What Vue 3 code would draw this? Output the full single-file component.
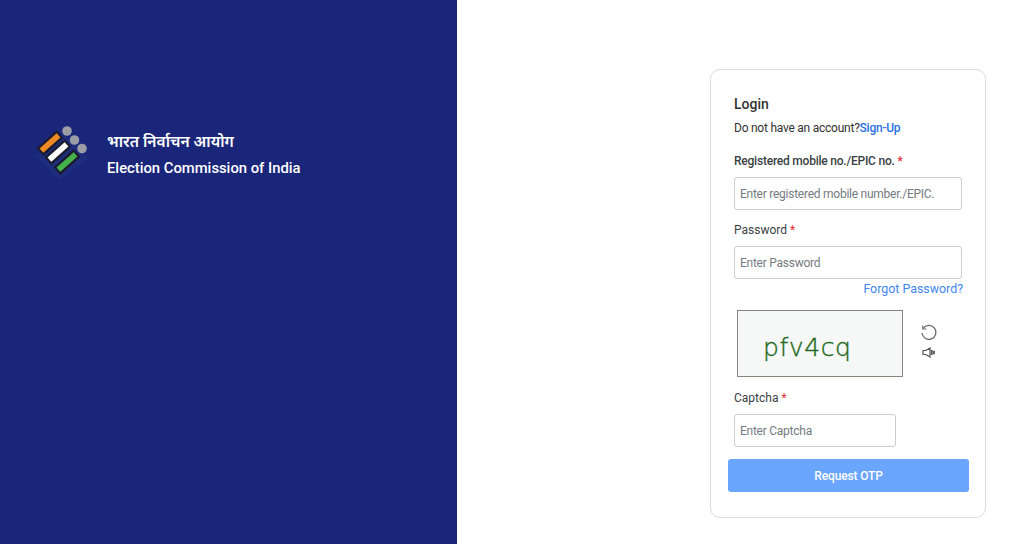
<template>
  <div class="page">
    <aside class="brand">
      <svg class="logo" width="56" height="56" viewBox="0 0 56 56">
        <path d="M1 32 L30 10 L54 34 L26 56 Z" fill="#20307f" opacity="0.6" />
        <g transform="translate(16 19) rotate(-42)">
          <rect x="-13.5" y="-5.2" width="27" height="10.4" rx="1" fill="#1b1c30" />
          <rect x="-11.5" y="-2.8" width="23" height="5.6" fill="#f08a24" />
        </g>
        <g transform="translate(24 28) rotate(-42)">
          <rect x="-13.5" y="-5.2" width="27" height="10.4" rx="1" fill="#1b1c30" />
          <rect x="-11.5" y="-2.8" width="23" height="5.6" fill="#fff" />
        </g>
        <g transform="translate(33 38) rotate(-42)">
          <rect x="-13.5" y="-5.2" width="27" height="10.4" rx="1" fill="#1b1c30" />
          <rect x="-11.5" y="-2.8" width="23" height="5.6" fill="#46b04a" />
        </g>
        <circle cx="33" cy="7" r="4.8" fill="#9a9ca6" />
        <circle cx="40.5" cy="16" r="4.8" fill="#9a9ca6" />
        <circle cx="48" cy="24.5" r="4.8" fill="#9a9ca6" />
      </svg>
      <div class="brand-text">
        <div class="hindi">भारत निर्वाचन आयोग</div>
        <div class="english">Election Commission of India</div>
      </div>
    </aside>

    <main class="main">
      <form class="card" @submit.prevent>
        <h1 class="title">Login</h1>
        <p class="signup">Do not have an account?<a href="#">Sign-Up</a></p>

        <label class="label first">Registered mobile no./EPIC no. <span class="req">*</span></label>
        <input class="field" placeholder="Enter registered mobile number./EPIC." />

        <label class="label second">Password <span class="req">*</span></label>
        <input class="field" type="password" placeholder="Enter Password" />
        <a class="forgot" href="#">Forgot Password?</a>

        <div class="captcha-row">
          <div class="captcha-img">pfv4cq</div>
          <div class="captcha-tools">
            <svg width="18" height="18" viewBox="0 0 18 18" fill="none" stroke="#666" stroke-width="1.3">
              <path d="M3.6 3.8 A7 7 0 1 1 2 9" />
              <path d="M2.8 1.4 V5 H6.4" stroke-width="1.2" />
            </svg>
            <svg width="14" height="11" viewBox="0 0 14 11" fill="none" stroke="#555" stroke-width="1.2">
              <path d="M1 3.5 H3.8 L8 1 V10 L3.8 7.5 H1 Z" />
              <path d="M9.8 3 V8 M12 3.8 V7.2" stroke-width="1.8" />
            </svg>
          </div>
        </div>

        <label class="label third">Captcha <span class="req">*</span></label>
        <input class="field short" placeholder="Enter Captcha" />

        <button class="otp" type="button">Request OTP</button>
      </form>
    </main>
  </div>
</template>

<script setup>
</script>

<style>
html, body {
  margin: 0;
  background: #fff;
}
</style>

<style scoped>
.page {
  display: flex;
  height: 544px;
  overflow: hidden;
  font-family: Roboto, "Noto Sans", sans-serif;
}
.brand {
  width: 457px;
  flex: none;
  box-sizing: border-box;
  background: #1a267a;
  display: flex;
  align-items: flex-start;
  gap: 17px;
  padding: 124px 0 0 34px;
}
.brand-text {
  padding-top: 6px;
  color: #fff;
  font-weight: 500;
}
.hindi {
  font-size: 15.5px;
  line-height: 22px;
  font-weight: 600;
  font-family: "Noto Sans", "Noto Sans Devanagari", "DejaVu Sans", sans-serif;
}
.english {
  margin-top: 6px;
  font-size: 14.8px;
  line-height: 20px;
}
.main {
  flex: 1;
  padding: 69px 0 0 253px;
}
.card {
  width: 276px;
  height: 449px;
  box-sizing: border-box;
  border: 1px solid #dcdcdc;
  border-radius: 10px;
  padding: 25px 16px 0 23px;
  display: flex;
  flex-direction: column;
  align-items: flex-start;
  color: #333;
}
.title {
  margin: 0;
  font-size: 14px;
  line-height: 18px;
  font-weight: 500;
}
.signup {
  margin: 7px 0 0;
  font-size: 12px;
  letter-spacing: -0.24px;
  line-height: 16px;
}
.signup a {
  color: #2a72e5;
  font-weight: 500;
  text-decoration: none;
}
.label {
  font-size: 12px;
  line-height: 16px;
  color: #3a3f44;
}
.first {
  margin-top: 17px;
  letter-spacing: -0.22px;
  font-weight: 500;
}
.second {
  margin-top: 12px;
}
.third {
  margin-top: 13px;
}
.req {
  color: #e8303a;
}
.field {
  box-sizing: border-box;
  width: 228px;
  height: 33px;
  margin-top: 8px;
  padding: 0 5px;
  border: 1px solid #ccc;
  border-radius: 3px;
  font-family: inherit;
  font-size: 12px;
  letter-spacing: -0.25px;
  outline: none;
}
.field::placeholder {
  color: #757b80;
  opacity: 1;
}
.short {
  width: 162px;
}
.forgot {
  align-self: flex-start;
  width: 229px;
  text-align: right;
  margin-top: 2px;
  font-size: 12.4px;
  line-height: 15px;
  color: #3f86f0;
  text-decoration: none;
}
.captcha-row {
  display: flex;
  align-items: center;
  gap: 17px;
  margin: 14px 0 0 3px;
}
.captcha-img {
  box-sizing: border-box;
  width: 166px;
  height: 67px;
  border: 1px solid #85857a;
  background: #f6f7f7;
  color: #1f6b22;
  font-family: "DejaVu Sans", sans-serif;
  font-weight: 200;
  -webkit-text-stroke: 0.4px #1f6b22;
  font-size: 25px;
  letter-spacing: 0.6px;
  line-height: 74px;
  padding-left: 25px;
}
.captcha-tools {
  display: flex;
  flex-direction: column;
  align-items: center;
  gap: 5px;
  margin-top: -5px;
}
.otp {
  margin: 12px 0 0 -6px;
  width: 241px;
  height: 33px;
  border: none;
  border-radius: 3px;
  background: #6aa5ff;
  color: #fff;
  font-family: inherit;
  font-size: 12px;
  letter-spacing: -0.15px;
  font-weight: 500;
}
</style>
